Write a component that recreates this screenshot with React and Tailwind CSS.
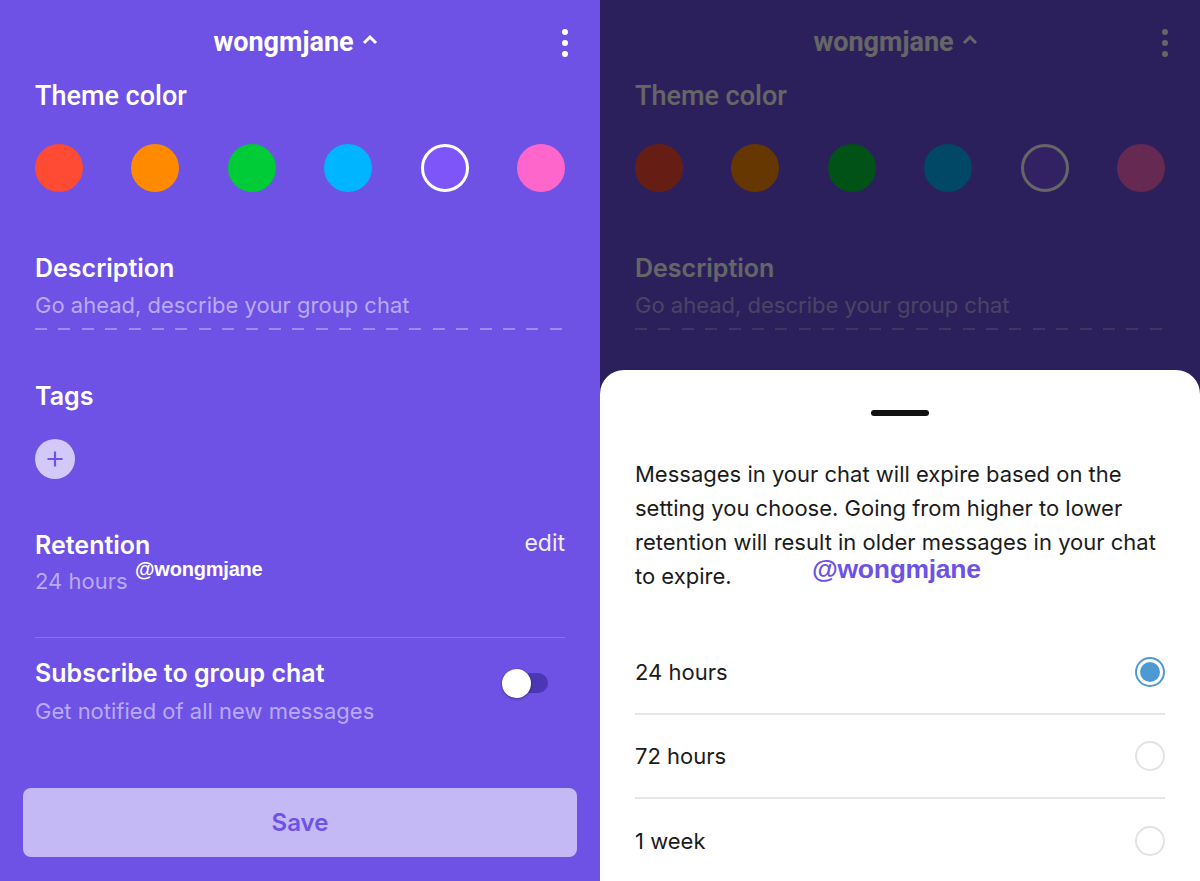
import React from "react";

const COLORS = ["bg-[#ff4b33]", "bg-[#ff8a00]", "bg-[#00cc38]", "bg-[#00b5ff]", "sel", "bg-[#ff66cc]"];

function Settings({ watermark }) {
  return (
    <div className="w-[600px] h-[881px] bg-[#6e52e5] flex flex-col text-white font-['Inter',sans-serif]">
      <div className="h-[81px] relative flex items-center justify-center">
        <div className="flex items-center gap-[7px] mt-[2px] mr-[8px]">
          <span className="font-['Roboto',sans-serif] font-bold text-[27px] leading-[30px]">wongmjane</span>
          <svg width="18" height="12" viewBox="0 0 18 12" className="-mt-[5px]">
            <path d="M3 10 L9 4 L15 10" fill="none" stroke="white" strokeWidth="3" />
          </svg>
        </div>
        <div className="absolute right-[32px] top-[29px] flex flex-col gap-[5px]">
          <span className="w-[6px] h-[6px] rounded-full bg-white" />
          <span className="w-[6px] h-[6px] rounded-full bg-white" />
          <span className="w-[6px] h-[6px] rounded-full bg-white" />
        </div>
      </div>
      <div className="px-[35px] flex flex-col">
        <div className="font-['Roboto',sans-serif] font-medium text-[27px] leading-[30px]">Theme color</div>
        <div className="mt-[33px] flex justify-between">
          {COLORS.map((c, i) =>
            c === "sel" ? (
              <div key={i} className="w-[48px] h-[48px] rounded-full bg-[#7d55f8] border-[3px] border-white" />
            ) : (
              <div key={i} className={"w-[48px] h-[48px] rounded-full " + c} />
            )
          )}
        </div>
        <div className="mt-[61px] font-semibold text-[25px] leading-[30px]">Description</div>
        <div className="mt-[7px] text-[22px] leading-[30px] text-[#b9aaf6]">Go ahead, describe your group chat</div>
        <div className="mt-[8px] h-[2px] bg-[repeating-linear-gradient(to_right,#9d8bf0_0_12px,transparent_12px_23.4px)]" />
        <div className="mt-[51px] font-semibold text-[25px] leading-[30px]">Tags</div>
        <div className="mt-[28px] w-[40px] h-[40px] rounded-full bg-[#d2c9f8] flex items-center justify-center">
          <svg width="20" height="20" viewBox="0 0 20 20">
            <path d="M10 2.5 V17.5 M2.5 10 H17.5" stroke="#6e52e5" strokeWidth="2.2" />
          </svg>
        </div>
        <div className="mt-[51px] flex justify-between items-start">
          <div className="font-semibold text-[25px] leading-[30px]">Retention</div>
          <div className="text-[23px] leading-[30px] text-[#f1eefd] -mt-[2px]">edit</div>
        </div>
        <div className="mt-[6px] relative">
          <div className="text-[22px] leading-[30px] text-[#b9aaf6]">24 hours</div>
          {watermark && (
            <div className="absolute left-[100px] -top-[9px] font-['Liberation_Sans',sans-serif] font-bold text-[20px] leading-[24px] tracking-[-0.2px] text-white">
              @wongmjane
            </div>
          )}
        </div>
        <div className="mt-[41px] h-px bg-[#8671ec]" />
        <div className="mt-[20px] flex justify-between">
          <div>
            <div className="font-semibold text-[25px] leading-[30px]">Subscribe to group chat</div>
            <div className="mt-[8px] text-[22px] leading-[30px] text-[#b9aaf6]">Get notified of all new messages</div>
          </div>
          <div className="relative w-[46px] h-[30px] mt-[10px] mr-[17px] flex items-center">
            <div className="absolute left-[4px] right-0 h-[20px] rounded-full bg-[#4b37b1]" />
            <div className="absolute left-0 w-[29px] h-[29px] rounded-full bg-white shadow-[0_1px_3px_rgba(0,0,0,0.35)]" />
          </div>
        </div>
      </div>
      <div className="mt-auto px-[23px] pb-[24px]">
        <div className="h-[69px] rounded-[8px] bg-[#c4b8f5] flex items-center justify-center font-semibold text-[24px] text-[#6e52e5]">
          Save
        </div>
      </div>
    </div>
  );
}

function Radio({ on }) {
  if (on) {
    return (
      <div className="w-[30px] h-[30px] rounded-full border-[2px] border-[#4d9ad3] flex items-center justify-center">
        <div className="w-[20px] h-[20px] rounded-full bg-[#4d9ad3]" />
      </div>
    );
  }
  return <div className="w-[30px] h-[30px] rounded-full border-[2px] border-[#e3e3e3]" />;
}

export default function App() {
  const opts = ["24 hours", "72 hours", "1 week"];
  return (
    <div className="flex w-[1200px] h-[881px] overflow-hidden">
      <Settings watermark />
      <div className="relative w-[600px] h-[881px] overflow-hidden">
        <Settings />
        <div className="absolute inset-0 bg-black/60" />
        <div className="absolute left-0 right-0 top-[370px] bottom-0 bg-white rounded-t-[24px] font-['Inter',sans-serif] text-[#1b1b1b]">
          <div className="mt-[40px] mx-auto w-[58px] h-[6px] rounded-full bg-[#111]" />
          <div className="relative mt-[41px] px-[35px] text-[22px] leading-[34px]">
            Messages in your chat will expire based on the setting you choose. Going from higher to lower retention will result in older messages in your chat to expire.
            <div className="absolute left-[212px] top-[95px] font-['Liberation_Sans',sans-serif] font-bold text-[26.5px] leading-[34px] tracking-[-0.3px] text-[#6e52e5]">
              @wongmjane
            </div>
          </div>
          <div className="mt-[38px] px-[35px]">
            {opts.map((o, i) => (
              <div
                key={o}
                className={"h-[84px] flex items-center justify-between " + (i < 2 ? "border-b-[2px] border-[#e6e6e6]" : "")}
              >
                <span className="text-[22px] text-[#1b1b1b]">{o}</span>
                <Radio on={i === 0} />
              </div>
            ))}
          </div>
        </div>
      </div>
    </div>
  );
}
